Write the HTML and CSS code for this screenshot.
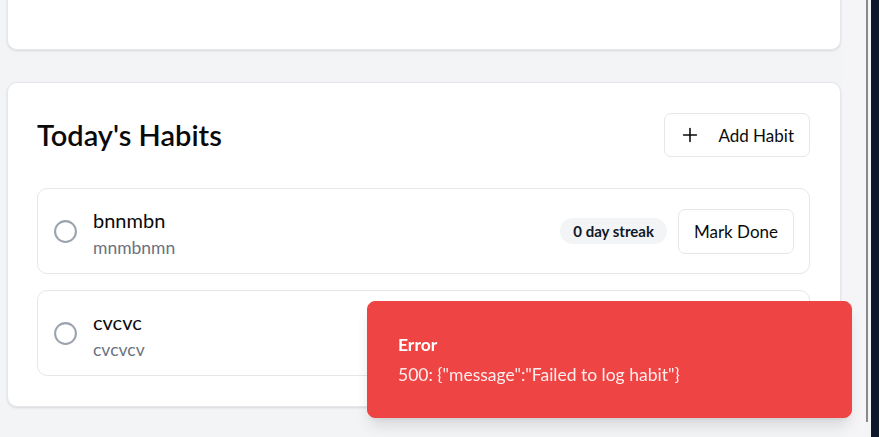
FILE: index.html
```html
<!DOCTYPE html>
<html lang="en">
<head>
<meta charset="utf-8">
<title>Habits</title>
<link rel="stylesheet" href="styles.css">
</head>
<body>
<div class="layout">
  <main class="main">
    <section class="card card-top"></section>
    <section class="card habits">
      <header class="habits-head">
        <h2 class="habits-title">Today's Habits</h2>
        <button class="btn btn-add" type="button">
          <svg class="icon-plus" viewBox="0 0 24 24" fill="none" stroke="currentColor" stroke-width="1.7" stroke-linecap="round" stroke-linejoin="round"><path d="M5 12h14"/><path d="M12 5v14"/></svg>
          <span>Add Habit</span>
        </button>
      </header>
      <div class="habit-list">
        <div class="habit">
          <svg class="check" viewBox="0 0 24 24" fill="none" stroke="currentColor" stroke-width="2"><circle cx="12" cy="12" r="10"/></svg>
          <div class="habit-text">
            <div class="habit-name">bnnmbn</div>
            <div class="habit-desc">mnmbnmn</div>
          </div>
          <div class="habit-actions">
            <span class="badge">0 day streak</span>
            <button class="btn btn-done" type="button">Mark Done</button>
          </div>
        </div>
        <div class="habit">
          <svg class="check" viewBox="0 0 24 24" fill="none" stroke="currentColor" stroke-width="2"><circle cx="12" cy="12" r="10"/></svg>
          <div class="habit-text">
            <div class="habit-name">cvcvc</div>
            <div class="habit-desc">cvcvcv</div>
          </div>
          <div class="habit-actions">
            <span class="badge">0 day streak</span>
            <button class="btn btn-done" type="button">Mark Done</button>
          </div>
        </div>
      </div>
    </section>
  </main>
  <div class="strip"></div>
  <div class="scroll-line"></div>
  <div class="scroll-gap"></div>
  <div class="dark"></div>
</div>
<div class="toast" role="alert">
  <div class="toast-title">Error</div>
  <div class="toast-msg">500: {"message":"Failed to log habit"}</div>
</div>
</body>
</html>
```
FILE: styles.css
```css
* { box-sizing: border-box; }
html, body { margin: 0; padding: 0; height: 100%; overflow: hidden; }
body {
  background: #f3f4f6;
  font-family: "Segoe UI", Lato, "Open Sans", sans-serif;
  color: #0a0a0a;
}
.layout { display: flex; height: 437px; }
.main {
  width: 842px;
  flex: none;
  padding-left: 7px;
  display: flex;
  flex-direction: column;
  gap: 32px;
}
.card {
  width: 834px;
  background: #fff;
  border: 1px solid #e5e7eb;
  border-radius: 10px;
  box-shadow: 0 1px 3px rgba(0,0,0,0.08), 0 1px 2px rgba(0,0,0,0.04);
}
.card-top { height: 70px; margin-top: -20px; }
.habits { padding: 30px 30px 30px 29px; }
.habits-head {
  display: flex;
  align-items: center;
  justify-content: space-between;
  height: 44px;
  margin-bottom: 31px;
}
.habits-title {
  margin: 0;
  font-size: 29px;
  line-height: 36px;
  font-weight: 600;
  color: #0a0a0a;
}
.btn {
  font-family: inherit;
  background: #fff;
  border: 1px solid #e5e7eb;
  border-radius: 7px;
  color: #0a0a0a;
  font-size: 17px;
  font-weight: 400;
  cursor: pointer;
  display: inline-flex;
  align-items: center;
}
.btn-add {
  height: 44px;
  padding: 0 15px 0 14px;
  gap: 17px;
}
.icon-plus { width: 22px; height: 22px; }
.habit-list { display: flex; flex-direction: column; gap: 16px; }
.habit {
  height: 86px;
  border: 1px solid #e5e7eb;
  border-radius: 10px;
  padding: 0 15px;
  display: flex;
  align-items: center;
  gap: 15px;
}
.check { width: 25px; height: 25px; color: #9ca3af; flex: none; }
.habit-text { flex: 1; display: flex; flex-direction: column; margin-top: 3.5px; }
.habit-name { font-size: 20px; line-height: 26px; color: #0a0a0a; }
.habit-desc { font-size: 17.5px; line-height: 22px; color: #6b7280; margin-top: 3.5px; }
.habit-actions { display: flex; align-items: center; gap: 11px; }
.badge {
  height: 26px;
  display: inline-flex;
  align-items: center;
  padding: 0 13px;
  border-radius: 999px;
  background: #f3f4f6;
  font-size: 15px;
  font-weight: 700;
  color: #111827;
}
.btn-done { height: 45px; padding: 0 15px; }
.strip { width: 24px; flex: none; background: #f5f5f7; }
.scroll-line { width: 2px; flex: none; height: 422px; background: #8a8a8a; }
.scroll-gap { width: 3px; flex: none; background: #f3f4f6; }
.dark { flex: 1; background: #0f172a; }
.toast {
  position: fixed;
  right: 27px;
  bottom: 19px;
  width: 485px;
  height: 117px;
  padding: 30px;
  border: 1px solid #ef4444;
  border-radius: 8px;
  background: #ef4444;
  color: #fff;
  box-shadow: 0 10px 15px -3px rgba(0,0,0,0.12), 0 4px 6px -4px rgba(0,0,0,0.1);
  display: flex;
  flex-direction: column;
  gap: 5px;
}
.toast-title { font-size: 17.5px; line-height: 25px; font-weight: 700; }
.toast-msg { font-size: 17.5px; line-height: 25px; opacity: 0.9; }
```
